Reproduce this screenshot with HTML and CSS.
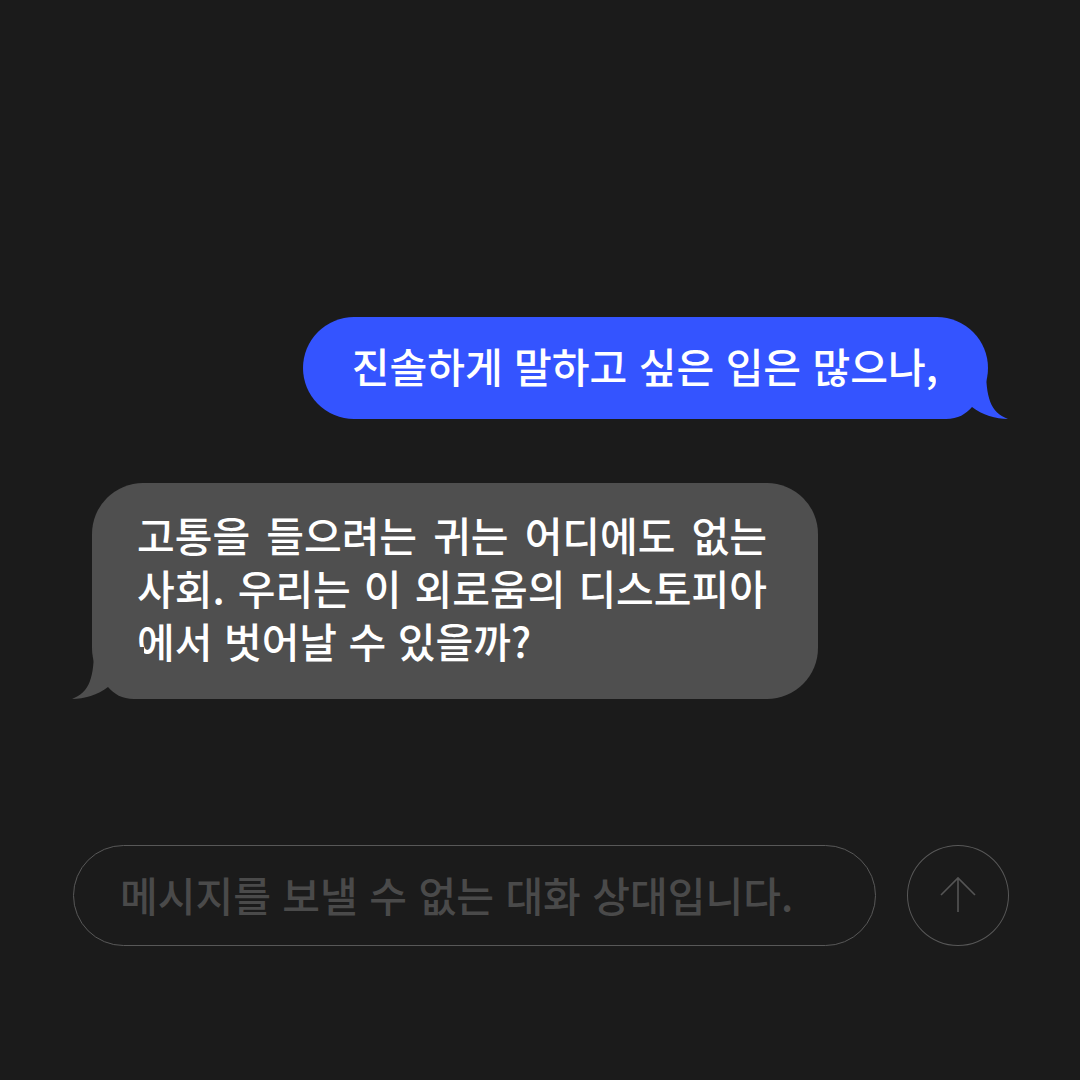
FILE: index.html
```html
<!DOCTYPE html>
<html lang="ko">
<head>
  <meta charset="UTF-8">
  <meta name="viewport" content="width=device-width, initial-scale=1.0">
  <title>대화</title>
  <link rel="stylesheet" href="styles.css">
</head>
<body>
  <div class="screen">
    <div class="row row-out">
      <div class="bubble bubble-out">
        진솔하게 말하고 싶은 입은 많으나,
        <svg class="tail tail-out" width="72" height="52" viewBox="0 0 72 52">
          <path d="M0 0 H50 C50 30 54 45 72 52 C60 52 46 48 36 40 C30 47 22 52 10 52 H0 Z"/>
        </svg>
      </div>
    </div>

    <div class="row row-in">
      <div class="bubble bubble-in">
        <span class="line line-full">고통을 들으려는 귀는 어디에도 없는</span>
        <span class="line line-full">사회. 우리는 이 외로움의 디스토피아</span>
        <span class="line">에서 벗어날 수 있을까?</span>
        <svg class="tail tail-in" width="72" height="52" viewBox="0 0 72 52">
          <path d="M0 0 H50 C50 30 54 45 72 52 C60 52 46 48 36 40 C30 47 22 52 10 52 H0 Z"/>
        </svg>
      </div>
    </div>

    <div class="composer">
      <div class="input-box">메시지를 보낼 수 없는 대화 상대입니다.</div>
      <div class="send-btn">
        <svg width="40" height="40" viewBox="0 0 40 40">
          <path d="M20 2 V36 M3 19 L20 2 L37 19" fill="none" stroke="#555" stroke-width="1.6"/>
        </svg>
      </div>
    </div>
  </div>
</body>
</html>
```

FILE: styles.css
```css
body {
  margin: 0;
  padding: 0;
  background-color: #1b1b1b;
  font-family: 'Noto Sans CJK KR', 'Noto Sans', sans-serif;
}

.screen {
  width: 1080px;
  height: 1080px;
  display: flex;
  flex-direction: column;
  padding-top: 317px;
  box-sizing: border-box;
}

.row {
  display: flex;
}

.row-out {
  justify-content: flex-end;
  padding-right: 92px;
}

.row-in {
  justify-content: flex-start;
  padding-left: 92px;
  margin-top: 64px;
}

.bubble {
  position: relative;
  color: #fff;
  font-size: 41px;
  font-weight: 500;
  line-height: 53px;
  border-radius: 51px;
  white-space: nowrap;
}

.bubble-out {
  background-color: #3454ff;
  padding: 22px 50px 27px 49px;
}

.bubble-in {
  background-color: #4f4f4f;
  width: 630px;
  padding: 25px 51px 32px 45px;
}

.line {
  display: block;
}

.line-full {
  text-align: justify;
  text-align-last: justify;
}

.tail {
  position: absolute;
  bottom: 0;
}

.tail-out {
  right: -20px;
  fill: #3454ff;
}

.tail-in {
  left: -20px;
  fill: #4f4f4f;
  transform: scaleX(-1);
}

.composer {
  display: flex;
  align-items: center;
  gap: 31px;
  margin-top: 146px;
  padding-left: 73px;
}

.input-box {
  width: 803px;
  height: 101px;
  box-sizing: border-box;
  border: 1.5px solid #585858;
  border-radius: 51px;
  display: flex;
  align-items: center;
  padding-left: 46px;
  padding-bottom: 4px;
  color: #4a4a4a;
  font-size: 41px;
  font-weight: 500;
}

.send-btn {
  width: 102px;
  height: 101px;
  box-sizing: border-box;
  border: 1.5px solid #585858;
  border-radius: 50%;
  display: flex;
  align-items: center;
  justify-content: center;
}
```
